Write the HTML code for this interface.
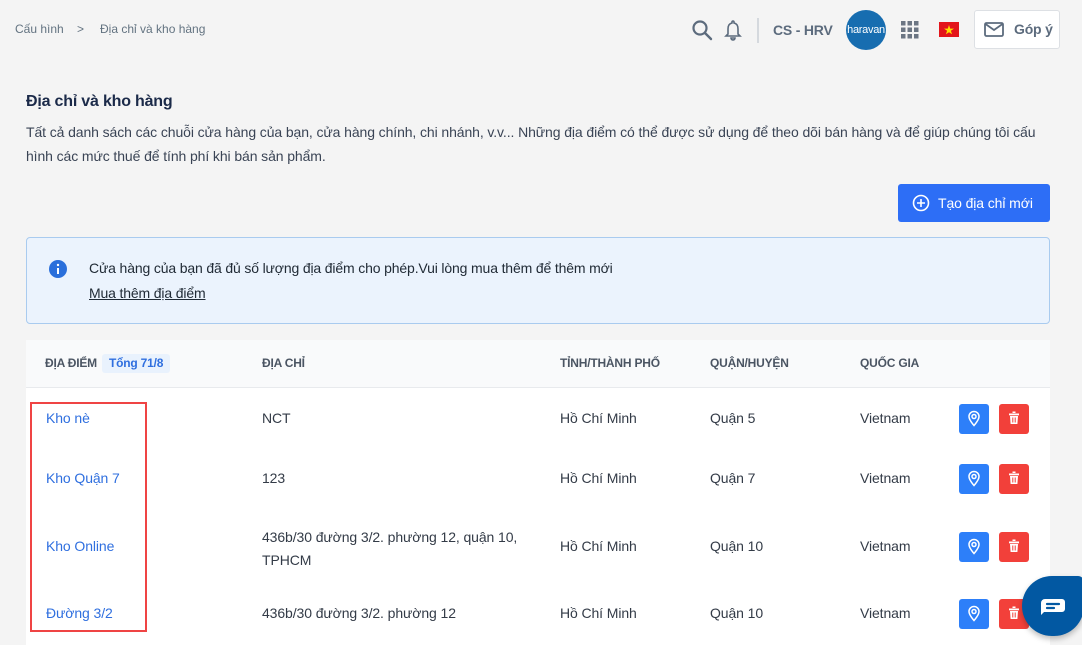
<!DOCTYPE html><html><head><meta charset="utf-8"><style>
*{margin:0;padding:0;box-sizing:border-box}
body{width:1082px;height:645px;overflow:hidden;background:#f4f4f4;font-family:"Liberation Sans",Roboto,sans-serif;position:relative;color:#212b36}
.a{position:absolute}
.bc{font-size:12px;color:#637381;top:22px}
.th{font-size:12px;font-weight:bold;color:#4b5563;top:356px;letter-spacing:-0.2px}
.td{font-size:14px;color:#333b47;letter-spacing:-0.1px}
.lk{font-size:14px;color:#2f6fdf;letter-spacing:-0.1px}
.btn{position:absolute;width:30px;height:30px;border-radius:3px}
.b1{background:#2d7ff9;left:959px}.b2{background:#f2403a;left:999px}
</style></head><body>
<div class="a bc" style="left:15px">Cấu hình</div>
<div class="a bc" style="left:77px">&gt;</div>
<div class="a bc" style="left:100px">Địa chỉ và kho hàng</div>
<svg class="a" style="left:691px;top:19px" width="22" height="22" viewBox="0 0 22 22"><circle cx="9" cy="9" r="6.5" fill="none" stroke="#5c6b7d" stroke-width="2.2"/><path d="M14 14l6 6" stroke="#5c6b7d" stroke-width="2.4" stroke-linecap="round"/></svg>
<svg class="a" style="left:724px;top:19px" width="18" height="22" viewBox="0 0 18 22"><path d="M9 2a1 1 0 0 1 1 1v1c3 .6 4 3 4 6v5l2 2H2l2-2v-5c0-3 1-5.4 4-6V3a1 1 0 0 1 1-1zM7 19h4a2 2 0 0 1-4 0z" fill="none" stroke="#5c6b7d" stroke-width="1.6"/></svg>
<div class="a" style="left:757px;top:18px;width:2px;height:25px;background:#d5d9de"></div>
<div class="a" style="left:773px;top:22px;font-size:14px;font-weight:bold;color:#5c6b7d;letter-spacing:-0.2px">CS - HRV</div>
<div class="a" style="left:846px;top:10px;width:40px;height:40px;border-radius:50%;background:#176db0;color:#fff;font-size:11px;line-height:40px;text-align:center;overflow:hidden;letter-spacing:-0.3px">haravan</div>
<svg class="a" style="left:901px;top:21px" width="18" height="18"><g fill="#6b7583"><rect x="0" y="0" width="4.5" height="4.5"/><rect x="6.5" y="0" width="4.5" height="4.5"/><rect x="13" y="0" width="4.5" height="4.5"/><rect x="0" y="6.5" width="4.5" height="4.5"/><rect x="6.5" y="6.5" width="4.5" height="4.5"/><rect x="13" y="6.5" width="4.5" height="4.5"/><rect x="0" y="13" width="4.5" height="4.5"/><rect x="6.5" y="13" width="4.5" height="4.5"/><rect x="13" y="13" width="4.5" height="4.5"/></g></svg>
<svg class="a" style="left:939px;top:22px" width="20" height="15"><rect width="20" height="15" fill="#e3151b"/><polygon points="10,3 11.2,6.6 15,6.6 11.9,8.8 13.1,12.3 10,10.2 6.9,12.3 8.1,8.8 5,6.6 8.8,6.6" fill="#ffdd00"/></svg>
<div class="a" style="left:974px;top:10px;width:86px;height:39px;background:#fff;border:1px solid #dde0e4;border-radius:3px"></div>
<svg class="a" style="left:984px;top:22px" width="20" height="15"><rect x="1" y="1" width="18" height="13" rx="1.5" fill="none" stroke="#5c6b7d" stroke-width="1.8"/><path d="M1.5 2l8.5 6 8.5-6" fill="none" stroke="#5c6b7d" stroke-width="1.8"/></svg>
<div class="a" style="left:1014px;top:21px;font-size:14px;font-weight:bold;color:#5c6b7d;letter-spacing:-0.2px">Góp ý</div>

<div class="a" style="left:26px;top:93px;font-size:16px;font-weight:bold;color:#1b2a49;letter-spacing:-0.2px">Địa chỉ và kho hàng</div>
<div class="a" style="left:26px;top:120px;width:1040px;font-size:14px;line-height:24px;color:#3a4455;letter-spacing:-0.1px">Tất cả danh sách các chuỗi cửa hàng của bạn, cửa hàng chính, chi nhánh, v.v... Những địa điểm có thể được sử dụng để theo dõi bán hàng và để giúp chúng tôi cấu hình các mức thuế để tính phí khi bán sản phẩm.</div>
<div class="a" style="left:898px;top:184px;width:152px;height:38px;background:#2d6ef6;border-radius:3px;color:#fff;font-size:14px;line-height:38px;padding-left:40px;letter-spacing:-0.1px">Tạo địa chỉ mới</div>
<svg class="a" style="left:912px;top:194px" width="18" height="18"><circle cx="9" cy="9" r="7.5" fill="none" stroke="#fff" stroke-width="1.6"/><path d="M9 5v8M5 9h8" stroke="#fff" stroke-width="1.6"/></svg>

<div class="a" style="left:26px;top:237px;width:1024px;height:87px;background:#ebf3fd;border:1px solid #a9cbef;border-radius:4px"></div>
<svg class="a" style="left:48px;top:259px" width="20" height="20"><circle cx="10" cy="10" r="9" fill="#2a6fdb"/><rect x="9" y="9" width="2" height="6" fill="#fff"/><circle cx="10" cy="6" r="1.2" fill="#fff"/></svg>
<div class="a" style="left:89px;top:260px;font-size:14px;color:#212b36;letter-spacing:-0.15px">Cửa hàng của bạn đã đủ số lượng địa điểm cho phép.Vui lòng mua thêm để thêm mới</div>
<div class="a" style="left:89px;top:285px;font-size:14px;color:#212b36;text-decoration:underline;letter-spacing:-0.15px">Mua thêm địa điểm</div>

<div class="a" style="left:26px;top:340px;width:1024px;height:305px;background:#fff"></div>
<div class="a" style="left:26px;top:340px;width:1024px;height:48px;background:#f9fafb;border-bottom:1px solid #e8eaed"></div>
<div class="a th" style="left:45px">ĐỊA ĐIỂM</div>
<div class="a" style="left:102px;top:354px;height:19px;padding:0 7px;background:#e9f2fd;border-radius:3px;font-size:12px;font-weight:bold;color:#2f6fdf;line-height:19px;letter-spacing:-0.2px">Tổng 71/8</div>
<div class="a th" style="left:262px">ĐỊA CHỈ</div>
<div class="a th" style="left:560px">TỈNH/THÀNH PHỐ</div>
<div class="a th" style="left:710px">QUẬN/HUYỆN</div>
<div class="a th" style="left:860px">QUỐC GIA</div>

<div class="a lk" style="left:46px;top:410px">Kho nè</div>
<div class="a td" style="left:262px;top:410px">NCT</div>
<div class="a td" style="left:560px;top:410px">Hồ Chí Minh</div>
<div class="a td" style="left:710px;top:410px">Quận 5</div>
<div class="a td" style="left:860px;top:410px">Vietnam</div>

<div class="a lk" style="left:46px;top:470px">Kho Quận 7</div>
<div class="a td" style="left:262px;top:470px">123</div>
<div class="a td" style="left:560px;top:470px">Hồ Chí Minh</div>
<div class="a td" style="left:710px;top:470px">Quận 7</div>
<div class="a td" style="left:860px;top:470px">Vietnam</div>

<div class="a lk" style="left:46px;top:538px">Kho Online</div>
<div class="a td" style="left:262px;top:526px;line-height:23px">436b/30 đường 3/2. phường 12, quận 10,<br>TPHCM</div>
<div class="a td" style="left:560px;top:538px">Hồ Chí Minh</div>
<div class="a td" style="left:710px;top:538px">Quận 10</div>
<div class="a td" style="left:860px;top:538px">Vietnam</div>

<div class="a lk" style="left:46px;top:605px">Đường 3/2</div>
<div class="a td" style="left:262px;top:605px">436b/30 đường 3/2. phường 12</div>
<div class="a td" style="left:560px;top:605px">Hồ Chí Minh</div>
<div class="a td" style="left:710px;top:605px">Quận 10</div>
<div class="a td" style="left:860px;top:605px">Vietnam</div>

<div class="a" style="left:30px;top:402px;width:117px;height:230px;border:2px solid #ef4444"></div>

<svg width="0" height="0" style="position:absolute"><defs>
<g id="pin"><path d="M15 7.5a5 5 0 0 0-5 5c0 3.5 5 9 5 9s5-5.5 5-9a5 5 0 0 0-5-5z" fill="none" stroke="#fff" stroke-width="1.5"/><circle cx="15" cy="12.5" r="2" fill="none" stroke="#fff" stroke-width="1.5"/></g>
<g id="bin"><rect x="13.5" y="7.5" width="3" height="1.5" fill="#fff"/><rect x="10" y="9.5" width="10" height="1.8" fill="#fff"/><path d="M11 12h8l-.6 8h-6.8z" fill="#fff"/><path d="M13.8 13.5v5M16.2 13.5v5" stroke="#f2403a" stroke-width="1"/></g></defs></svg>
<div class="btn b1" style="top:404px"><svg width="30" height="30"><use href="#pin"/></svg></div><div class="btn b2" style="top:404px"><svg width="30" height="30"><use href="#bin"/></svg></div>
<div class="btn b1" style="top:464px"><svg width="30" height="30"><use href="#pin"/></svg></div><div class="btn b2" style="top:464px"><svg width="30" height="30"><use href="#bin"/></svg></div>
<div class="btn b1" style="top:532px"><svg width="30" height="30"><use href="#pin"/></svg></div><div class="btn b2" style="top:532px"><svg width="30" height="30"><use href="#bin"/></svg></div>
<div class="btn b1" style="top:599px"><svg width="30" height="30"><use href="#pin"/></svg></div><div class="btn b2" style="top:599px"><svg width="30" height="30"><use href="#bin"/></svg></div>

<div class="a" style="left:1022px;top:576px;width:62px;height:60px;background:#0258a2;border-radius:30px 6px 30px 30px;box-shadow:0 3px 6px rgba(0,0,0,.25)"></div>
<svg class="a" style="left:1040px;top:597px" width="26" height="20"><path d="M5 2h17a3 3 0 0 1 3 3v7a3 3 0 0 1-3 3H4l-3 3V6a4 4 0 0 1 4-4z" fill="#fff"/><path d="M7 7h12M7 11h7" stroke="#0258a2" stroke-width="2.2" stroke-linecap="round"/></svg>
</body></html>
